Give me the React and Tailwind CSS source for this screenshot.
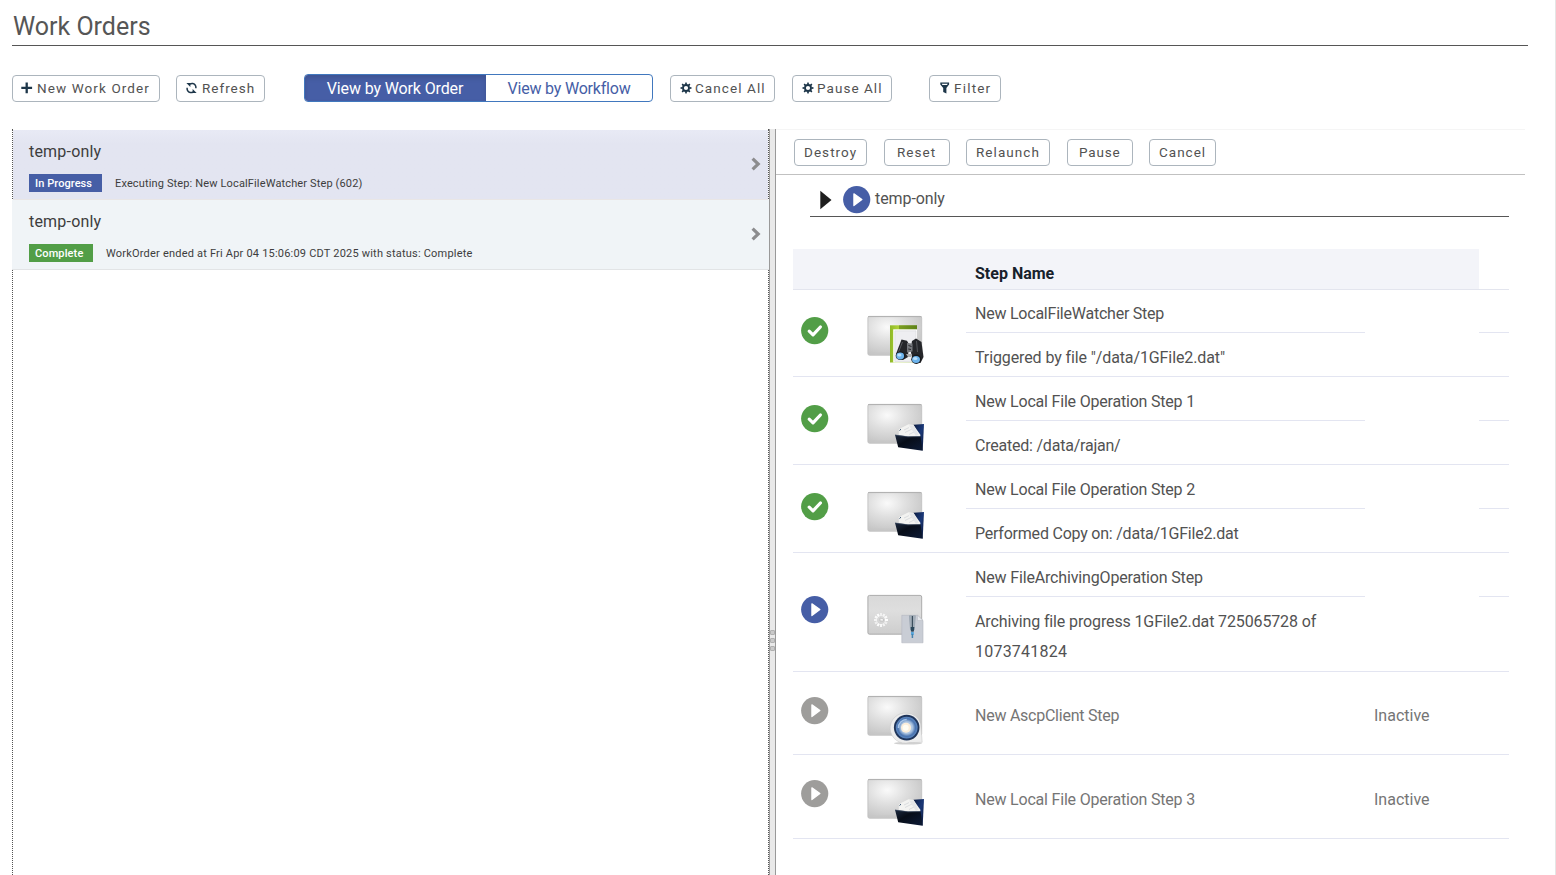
import React from "react";

const PlusIcon = () => (
  <svg width="12" height="12" viewBox="0 0 12 12" className="mb-[2px] shrink-0">
    <path d="M5.7 0.5V11.2M0.3 5.9H11.1" stroke="#1d3649" strokeWidth="2.3" fill="none" />
  </svg>
);

const RefreshIcon = () => (
  <svg width="12" height="12" viewBox="0 0 12 12" className="mb-[2px] shrink-0">
    <path d="M3.6 2.2C5.6 0.9 8.3 1.2 9.4 3.4C9.9 4.3 10 5.2 9.9 6.3" stroke="#1d3649" strokeWidth="1.5" fill="none" />
    <path d="M7.4 9.8C5.4 11.1 2.7 10.8 1.6 8.6C1.1 7.7 1 6.8 1.1 5.7" stroke="#1d3649" strokeWidth="1.5" fill="none" />
    <path d="M0.4 0.9H4.4V4.9Z" fill="#1d3649" />
    <path d="M10.6 11.1H6.6V7.1Z" fill="#1d3649" />
  </svg>
);

const CogIcon = () => (
  <svg width="12" height="12" viewBox="-6 -6 12 12" className="mb-[2px] shrink-0">
    <circle r="3" stroke="#1d3649" strokeWidth="1.8" fill="none" />
    {[0, 45, 90, 135, 180, 225, 270, 315].map((a) => (
      <path key={a} d="M-1 -3.4L-0.7 -5.5H0.7L1 -3.4Z" fill="#1d3649" transform={`rotate(${a})`} />
    ))}
  </svg>
);

const FilterIcon = () => (
  <svg width="10" height="12" viewBox="0 0 10 12" className="mb-[2px] shrink-0">
    <path d="M0.3 0.6H9.1V2.6L6.4 5.9V11.6L3.2 10V5.9L0.3 2.6Z" fill="#1d3649" />
    <path d="M1.7 1.8H7.7L7 3H2.4Z" fill="#fff" />
  </svg>
);

const Chevron = () => (
  <svg width="10" height="14" viewBox="0 0 10 14" className="mb-px shrink-0">
    <path d="M1.6 1.6L7.2 7L1.6 12.4" stroke="#8c8c8e" strokeWidth="3.2" fill="none" />
  </svg>
);

function StatusIcon({ kind }) {
  const fill = kind === "done" ? "#529e47" : kind === "running" ? "#465ea6" : "#9e9d9b";
  return (
    <svg width="28" height="28" viewBox="0 0 28 28" className="shrink-0">
      <circle cx="13.7" cy="13.6" r="13.6" fill={fill} />
      {kind === "done" ? (
        <path d="M8.2 14.2L12 17.8L19.4 10" stroke="#fff" strokeWidth="3.2" strokeLinecap="round" strokeLinejoin="round" fill="none" />
      ) : (
        <path d="M10.9 7.8L18.9 13.6L10.9 19.6Z" fill="#fff" stroke="#fff" strokeWidth="1.2" strokeLinejoin="round" />
      )}
    </svg>
  );
}

const Watcher = () => (
  <g>
    <rect x="30" y="17.3" width="27" height="37.2" fill="url(#green)" />
    <path d="M39 17.3H57V21.5H39Z" fill="#4d7010" opacity=".5" />
    <path d="M33.2 21.3H57V54.5H33.2Z" fill="#fff" />
    <path d="M34.8 22.8H56V53.5H34.8Z" fill="#eeeef1" stroke="#d0d0d5" strokeWidth=".5" />
    <path d="M41.5 31.5L47 32.8L48.8 36L48 49L43 52L36.2 50L36 46Z" fill="#25262a" />
    <path d="M52 33L56 30.5L61.5 34L63.5 49L60.5 55L53 54L50.5 42Z" fill="#25262a" />
    <path d="M47 35L52.5 35.5V43.5L47 44.5Z" fill="#77797e" />
    <path d="M48.5 37.5L51.5 38.5M48.3 41L51 41.5" stroke="#25262a" />
    <path d="M42.5 34L38.5 44M56.5 33L57.5 44" stroke="#54565b" strokeWidth="1" />
    <path d="M46 46L52 46L51 49L48 49Z" fill="#aaa" />
    <ellipse cx="40.4" cy="47.8" rx="4.7" ry="4.3" fill="#17181b" />
    <ellipse cx="40.2" cy="48" rx="3.9" ry="3.4" fill="#6db4ed" />
    <ellipse cx="39.4" cy="47" rx="2.1" ry="1.5" fill="#b9dffa" />
    <ellipse cx="56.3" cy="51.3" rx="5" ry="4.7" fill="#17181b" />
    <ellipse cx="56" cy="51.5" rx="4" ry="3.6" fill="#6db4ed" />
    <ellipse cx="55.2" cy="50.5" rx="2.2" ry="1.6" fill="#b9dffa" />
  </g>
);

const Folder = () => (
  <g>
    <path d="M53.5 28.8L64 28L62.7 54.6L57 52Z" fill="url(#navy)" />
    <path d="M38.8 39V33.5L42.5 31.2L48.5 28.2L53.5 29L60.5 39L59 44H39Z" fill="#f3f3f1" />
    <path d="M44 34L49 31.6M45 36.5L52 33M49 38.5L54 36" stroke="#d3d6d9" strokeWidth=".8" />
    <path d="M49 29.5L54 29.5L58.5 38.5L56 40Z" fill="#e4e6e8" />
    <path d="M39.5 34.5L41 33.2" stroke="#35516f" strokeWidth="1" />
    <path d="M35 38.8L48 40.5L60.5 40.2L62.7 54.7L38.2 51.2Z" fill="url(#front)" />
    <path d="M35.3 39.1L48 40.8L60.5 40.6" stroke="#42526b" strokeWidth=".6" fill="none" />
  </g>
);

const Archive = () => (
  <g>
    {[0, 30, 60, 90, 120, 150, 180, 210, 240, 270, 300, 330].map((a, i) => (
      <path key={a} d="M0 -4V-7" stroke="#fff" strokeWidth="2.1" opacity={0.6 + (i % 4) * 0.13} transform={`translate(21 33) rotate(${a})`} />
    ))}
    <path d="M20 31V34H23.5V32Z" fill="#f4f4f4" stroke="#aaa" strokeWidth=".5" />
    <path d="M41.8 28.3H57.5L63 33.5V55.8H41.8Z" fill="#c9cdd5" stroke="#b3b7bf" strokeWidth=".6" />
    <path d="M57.5 28.3V33.5H63Z" fill="#e6e8ec" stroke="#aeb2ba" strokeWidth=".4" />
    <path d="M49.2 28.5H55.6L54.8 42L52.4 46L50 42Z" fill="#8b98a4" />
    <path d="M51 29V42M54 29V42" stroke="#dce3e8" strokeWidth=".6" />
    <path d="M52.4 29V41" stroke="#3b4e5d" strokeWidth="1.2" />
    <path d="M50.6 40H54.4L53.8 44.5H51Z" fill="#2c485c" />
    <rect x="51" y="45" width="2.8" height="3" fill="#58a6dc" />
    <path d="M52.4 47V51" stroke="#4683ad" strokeWidth="1.5" />
  </g>
);

const Lens = () => (
  <g>
    <ellipse cx="48" cy="55.2" rx="14" ry="1.4" fill="#777" opacity=".35" />
    <path d="M46.7 25.2A14 14 0 0 1 60.7 36L62.2 54.3L49 54.6A15 15 0 1 1 46.7 25.2Z" fill="#ededed" stroke="#c9c9c9" strokeWidth=".6" />
    <circle cx="46.7" cy="39.6" r="12.8" fill="#1f355b" />
    <circle cx="46.7" cy="39.6" r="10.9" fill="url(#lens)" />
    <path d="M38.4 40A8.4 8.4 0 0 1 46.7 31.4" stroke="#a9c7ea" strokeWidth="1.5" fill="none" />
    <circle cx="46" cy="39.8" r="5" fill="#fbeedb" />
    <circle cx="45.7" cy="39.8" r="3" fill="#fffdf4" />
  </g>
);

const overlays = { watcher: Watcher, folder: Folder, archive: Archive, lens: Lens };

function StepThumb({ type }) {
  const Overlay = overlays[type];
  return (
    <svg width="76" height="50" viewBox="0 0 76 50" className="shrink-0 overflow-visible">
      <rect x="7.9" y="8.4" width="53.8" height="38.8" rx="1.6" fill={type === "archive" ? "url(#plateFlat)" : "url(#plate)"} stroke={type === "archive" ? "#a5a5a5" : "#c2c2c2"} strokeWidth=".9" />
      {type !== "archive" && <path d="M8 8.6H61.5" stroke="#a8a8a8" strokeWidth=".8" />}
      {type !== "archive" && <path d="M8.4 44.2H61.2V46.8H8.4Z" fill="#c6c6c6" opacity=".6" />}
      <Overlay />
    </svg>
  );
}

const Defs = () => (
  <svg width="0" height="0" className="absolute">
    <defs>
      <radialGradient id="plate" cx=".36" cy=".28" r=".85">
        <stop offset="0" stopColor="#fafafa" />
        <stop offset=".4" stopColor="#e0e0e0" />
        <stop offset="1" stopColor="#bebebe" />
      </radialGradient>
      <linearGradient id="plateFlat" x1="0" y1="0" x2="0" y2="1">
        <stop offset="0" stopColor="#d9d9d9" />
        <stop offset=".4" stopColor="#dedede" />
        <stop offset="1" stopColor="#cdcdcd" />
      </linearGradient>
      <linearGradient id="green" x1="0" y1="0" x2="1" y2="0">
        <stop offset="0" stopColor="#8fb928" />
        <stop offset=".3" stopColor="#aed136" />
        <stop offset="1" stopColor="#6d9420" />
      </linearGradient>
      <linearGradient id="navy" x1="0" y1="0" x2="1" y2="1">
        <stop offset="0" stopColor="#0b1a3d" />
        <stop offset=".5" stopColor="#1a3878" />
        <stop offset="1" stopColor="#0a1430" />
      </linearGradient>
      <linearGradient id="front" x1="0" y1="0" x2="1" y2="1">
        <stop offset="0" stopColor="#1d2a40" />
        <stop offset=".4" stopColor="#070d18" />
        <stop offset="1" stopColor="#0d1b38" />
      </linearGradient>
      <radialGradient id="lens" cx=".5" cy=".5" r=".5">
        <stop offset="0" stopColor="#f2f4f4" />
        <stop offset=".55" stopColor="#a9c2e0" />
        <stop offset=".8" stopColor="#4a74b0" />
        <stop offset="1" stopColor="#5c87c0" />
      </radialGradient>
    </defs>
  </svg>
);

function Button({ className, icon, text, children }) {
  return (
    <button className={`flex h-[27px] items-center whitespace-nowrap rounded border border-[#acb5bd] bg-white text-[13.5px] leading-none text-[#525252] ${className}`}>
      {icon}
      <span className={text}>{children}</span>
    </button>
  );
}

function WorkOrder({ className, badge, status, name, detail, detailClass }) {
  return (
    <div className={`flex h-[70px] items-center justify-between border-b ${className}`}>
      <div className="flex flex-col gap-3 pt-[5px] text-[#3d3d3d]">
        <span className="text-base leading-[20px] tracking-[0.2px]">{name}</span>
        <div className="flex h-[18px] items-center text-[11px] leading-[18px]">
          <span className={`h-[18px] pl-[6px] pt-px font-medium text-white ${badge}`}>{status}</span>
          <span className={`whitespace-nowrap pl-[13px] pt-px ${detailClass}`}>{detail}</span>
        </div>
      </div>
      <Chevron />
    </div>
  );
}

const steps = [
  { h: "h-[87px]", kind: "done", type: "watcher", name: "New LocalFileWatcher Step", nameClass: "tracking-[-0.23px]", detail: 'Triggered by file "/data/1GFile2.dat"', detailClass: "tracking-[-0.11px]", top: "h-[43px]" },
  { h: "h-[88px]", kind: "done", type: "folder", name: "New Local File Operation Step 1", nameClass: "tracking-[-0.2px]", detail: "Created: /data/rajan/", detailClass: "tracking-[-0.22px]", top: "h-[44px]" },
  { h: "h-[88px]", kind: "done", type: "folder", name: "New Local File Operation Step 2", nameClass: "tracking-[-0.2px]", detail: "Performed Copy on: /data/1GFile2.dat", detailClass: "tracking-[-0.22px]", top: "h-[44px]" },
  { h: "h-[119px]", kind: "running", type: "archive", name: "New FileArchivingOperation Step", nameClass: "tracking-[-0.16px]", detail: "Archiving file progress 1GFile2.dat 725065728 of", more: "1073741824", detailClass: "tracking-[-0.13px]", top: "h-[44px]" },
  { h: "h-[83px]", kind: "idle", type: "lens", name: "New AscpClient Step", nameClass: "tracking-[-0.25px]", state: "Inactive", statePad: "pt-[6px]" },
  { h: "h-[84px]", kind: "idle", type: "folder", name: "New Local File Operation Step 3", nameClass: "tracking-[-0.2px]", state: "Inactive", statePad: "pt-[7px]", lift: "pb-[2px]" },
];

function Step({ step }) {
  return (
    <div className={`flex border-b border-[#e3e5f1] text-base text-[#525252] ${step.h}`}>
      <div className={`flex w-[173px] items-center pl-[8px] ${step.lift ?? ""}`}>
        <div className="flex w-[59px] items-center pb-[4px]">
          <StatusIcon kind={step.kind} />
        </div>
        <StepThumb type={step.type} />
      </div>
      {step.state ? (
        <div className={`flex flex-1 items-center pl-[9px] text-[#757575] ${step.statePad}`}>
          <span className={`w-[399px] ${step.nameClass}`}>{step.name}</span>
          <span>{step.state}</span>
        </div>
      ) : (
        <>
          <div className="flex w-[399px] flex-col">
            <div className={`flex items-center border-b border-[#e3e5f1] pl-[9px] pt-[6px] ${step.top}`}>
              <span className={step.nameClass}>{step.name}</span>
            </div>
            <div className="flex flex-col pl-[9px] pt-[10px] leading-[30px]">
              <span className={`whitespace-nowrap ${step.detailClass}`}>{step.detail}</span>
              {step.more && <span className="tracking-[0.22px]">{step.more}</span>}
            </div>
          </div>
          <div className={`ml-auto w-[30px] border-b border-[#e3e5f1] ${step.top}`} />
        </>
      )}
    </div>
  );
}

export default function App() {
  return (
    <div className="flex h-[875px] w-[1556px] flex-col overflow-hidden border-r border-[#e5e5e5] bg-white pl-3 font-['Roboto',sans-serif]">
      <Defs />
      <h1 className="flex h-[46px] w-[1516px] items-center border-b border-[#565656] pl-px pt-[8px] text-[25px] leading-none text-[#565656]">Work Orders</h1>

      <div className="flex h-[83px] items-start pt-[28px]">
        <Button className="mt-px w-[148px] gap-[4px] pl-[8px]" icon={<PlusIcon />} text="tracking-[1.1px]">New Work Order</Button>
        <Button className="ml-4 mt-px w-[89px] gap-[4px] pl-[9px]" icon={<RefreshIcon />} text="tracking-[1px]">Refresh</Button>
        <div className="ml-[39px] flex h-[28px] w-[349px] overflow-hidden rounded border border-[#4178be] text-base leading-none">
          <button className="w-[181px] whitespace-nowrap bg-[#465ea6] pr-px pt-px tracking-[-0.13px] text-white shadow-[inset_0_3px_5px_rgba(0,0,0,0.125)]">View by Work Order</button>
          <button className="flex-1 whitespace-nowrap pt-px tracking-[-0.2px] text-[#465ea6]">View by Workflow</button>
        </div>
        <Button className="ml-[17px] mt-px w-[105px] gap-[3px] pl-[9px]" icon={<CogIcon />} text="tracking-[1.08px]">Cancel All</Button>
        <Button className="ml-[17px] mt-px w-[100px] gap-[3px] pl-[9px]" icon={<CogIcon />} text="tracking-[1.05px]">Pause All</Button>
        <Button className="ml-[37px] mt-px w-[72px] gap-[4px] pl-[10px]" icon={<FilterIcon />} text="tracking-[1.2px]">Filter</Button>
      </div>

      <div className="flex flex-1">
        <div className="w-[757px] border-x border-dotted border-[#555] pt-px">
          <WorkOrder
            className="border-b-[#e9e6e6] [border-bottom-style:solid] bg-linear-to-b from-[#e8eaf5] from-0% to-[#e3e5f1] to-20% pl-[16px] pr-[7px]"
            name="temp-only" status="In Progress" badge="w-[73px] bg-[#465ea6] tracking-[0.08px]"
            detail="Executing Step: New LocalFileWatcher Step (602)" detailClass="tracking-[0.14px]"
          />
          <WorkOrder
            className="-mx-px border-b-[#e2e4e6] bg-[#f0f4f7] pl-[17px] pr-[8px]"
            name="temp-only" status="Complete" badge="w-[64px] bg-[#529e47] tracking-[0.12px]"
            detail="WorkOrder ended at Fri Apr 04 15:06:09 CDT 2025 with status: Complete" detailClass="tracking-[0.205px]"
          />
        </div>

        <div className="flex w-[7px] flex-col items-center gap-[3px] border-x border-[#999] bg-[#e9e9e9] pt-[501px]">
          {[0, 1, 2].map((i) => (
            <span key={i} className="size-[5px] rounded-[1px] border border-[#b0b0b0] bg-[#c9c9c9]" />
          ))}
        </div>

        <div className="w-[749px] border-t border-[#f5f5f5]">
          <div className="flex h-[45px] items-start border-b border-[#c1c1c1] pl-[18px] pt-[9px]">
            <Button className="w-[73px] pl-[9px]" text="tracking-[1.05px]">Destroy</Button>
            <Button className="ml-[17px] w-[66px] pl-[12px]" text="tracking-[1.05px]">Reset</Button>
            <Button className="ml-4 w-[84px] pl-[9px]" text="tracking-[1.05px]">Relaunch</Button>
            <Button className="ml-[17px] w-[66px] pl-[11px]" text="tracking-[0.85px]">Pause</Button>
            <Button className="ml-4 w-[67px] pl-[9px]" text="tracking-[1px]">Cancel</Button>
          </div>

          <div className="ml-[34px] flex h-[42px] w-[699px] items-center border-b border-[#565656] pl-[10px] pt-[8px]">
            <svg width="12" height="20" viewBox="0 0 12 20"><path d="M0.3 0.8L11.5 10L0.3 19.2Z" fill="#1e1e1e" /></svg>
            <span className="ml-[11px]"><StatusIcon kind="running" /></span>
            <span className="pb-px pl-[4px] text-base tracking-[-0.08px] text-[#525252]">temp-only</span>
          </div>

          <div className="ml-[17px] mt-8 w-[716px]">
            <div className="border-b border-[#e3e5ee]">
              <div className="flex h-10 w-[686px] items-center bg-[#f3f4f9] pl-[182px] pt-[9px] text-base font-bold text-[#17212b]">Step Name</div>
            </div>
            {steps.map((step) => <Step key={step.name} step={step} />)}
          </div>
        </div>
      </div>
    </div>
  );
}
